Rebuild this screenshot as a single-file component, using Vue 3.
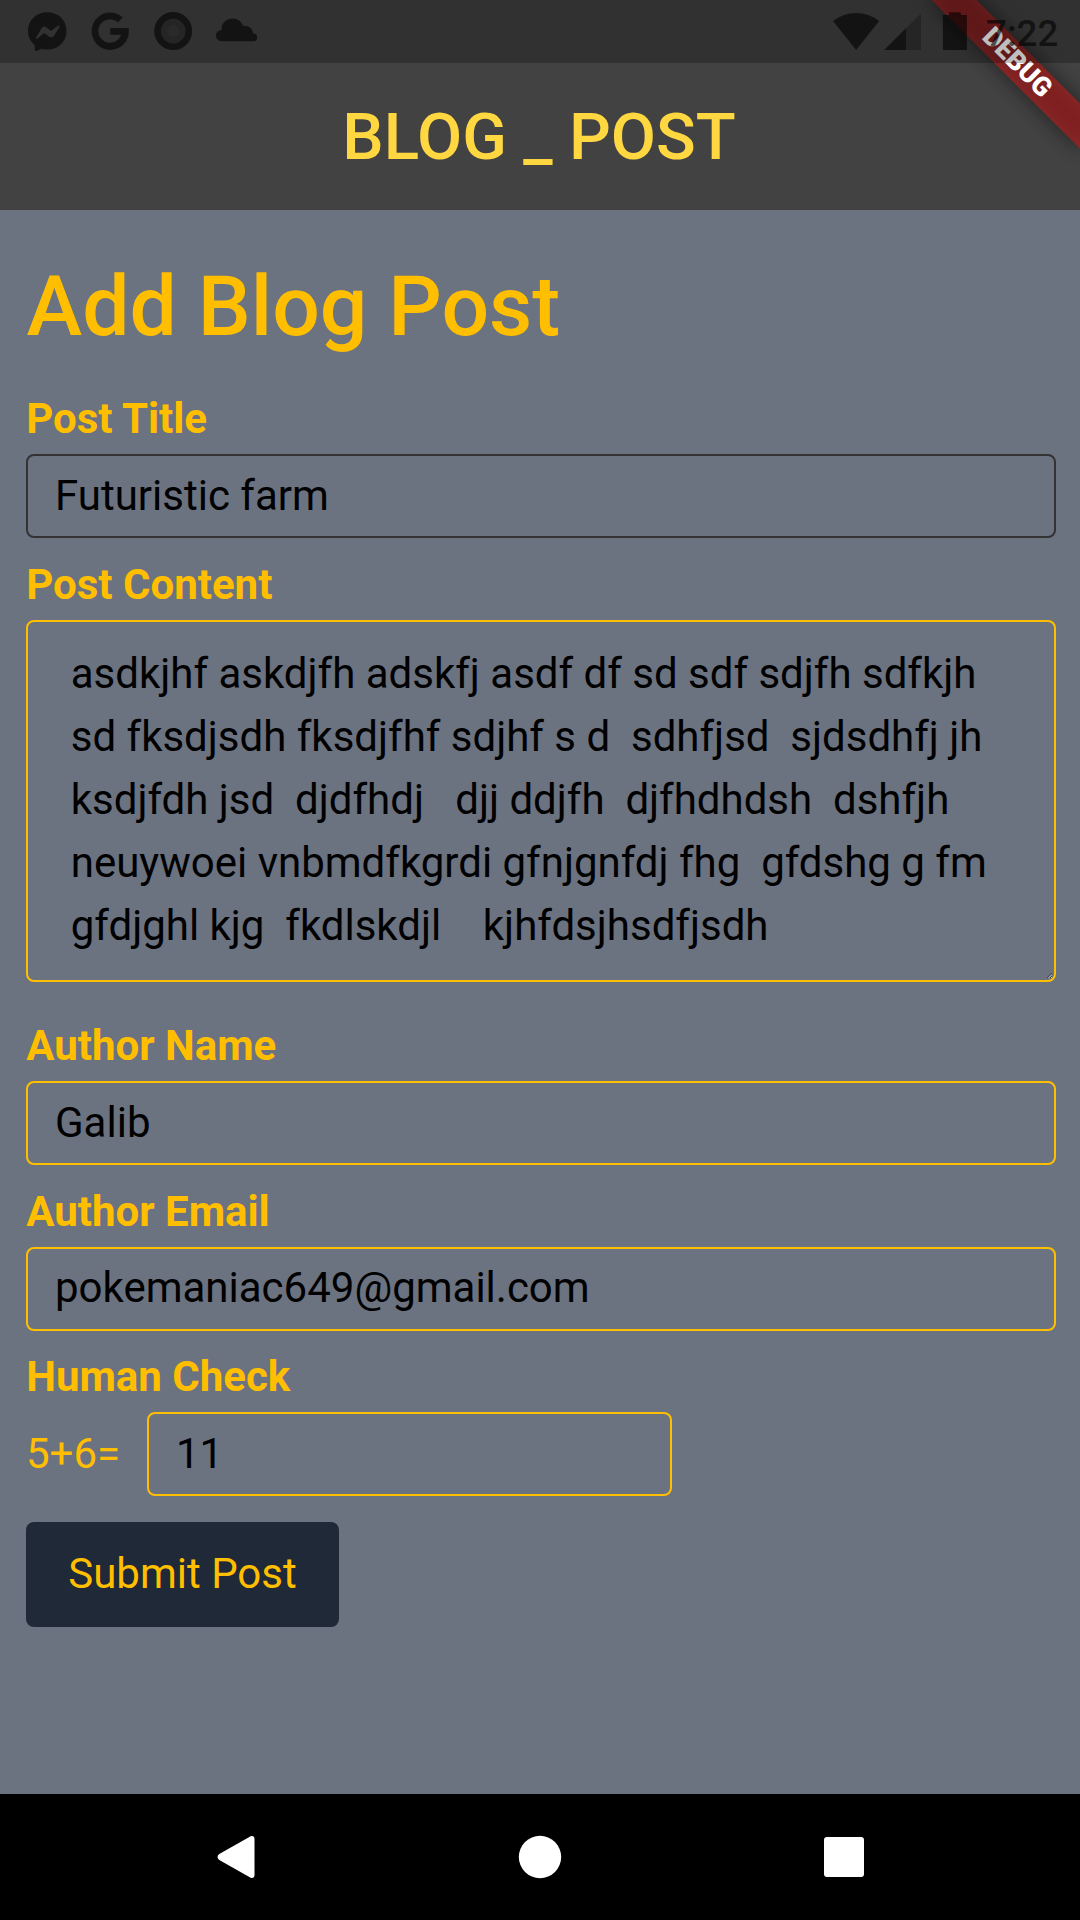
<script setup>
const content = [
  'asdkjhf askdjfh adskfj asdf df sd sdf sdjfh sdfkjh',
  'sd fksdjsdh fksdjfhf sdjhf s d  sdhfjsd  sjdsdhfj jh',
  'ksdjfdh jsd  djdfhdj   djj ddjfh  djfhdhdsh  dshfjh',
  'neuywoei vnbmdfkgrdi gfnjgnfdj fhg  gfdshg g fm',
  'gfdjghl kjg  fkdlskdjl    kjhfdsjhsdfjsdh',
].join('\n')
</script>

<template>
  <div class="screen">
    <header class="top">
      <h1 class="app-title">BLOG _ POST</h1>
      <div class="banner-clip">
        <div class="banner-shadow"></div>
        <div class="banner">DEBUG</div>
      </div>
      <div class="status">
        <svg class="notifications" width="270" height="63" viewBox="0 0 270 63">
          <path fill-rule="evenodd" d="M47.3 12.3c-11 0-19.3 8-19.3 18.6 0 5.6 2.3 10.3 6.2 13.6.4.4.5.8.5 1.3v3.4c0 1.200 1.200 2 2.300 1.500l4-1.700c.4-.2.7-.2 1.100-.1 1.700.5 3.400.7 5.200.7 11 0 19.200-8 19.200-18.700S58.300 12.300 47.300 12.300zM36 37.800l5.600-9.600c1-1.700 3-2.100 4.500-.9l4.300 3.300c.5.3 1 .3 1.400 0l6.300-5c.9-.7 2 .4 1.400 1.300l-5.700 9c-1 1.500-3 1.900-4.500.8l-4.300-3.300c-.4-.3-1-.3-1.400 0l-6.100 5.100c-.9.6-2-.1-1.500-.7z" />
          <path d="M122.800 17.300A18.700 18.700 0 1 0 128.700 28H110.300v6.700h10.800A11.700 11.700 0 1 1 118 22.500z" />
          <path fill-rule="evenodd" d="M173.200 12.100a19 19 0 1 0 0 38 19 19 0 0 0 0-38zm0 6.700a12.300 12.300 0 1 1 0 24.600 12.300 12.300 0 0 1 0-24.600z" />
          <circle cx="173.200" cy="31.100" r="12.300" fill-opacity=".39" />
          <circle cx="173.200" cy="31.100" r="6" fill="#fff" fill-opacity=".025" />
          <path d="M221.500 41.300a5.700 5.700 0 0 1 .2-11.400C221 23.500 226 18.500 232.500 18.500c5 0 8.900 3 10.600 7.400 5.300-.7 9.500 2.500 10.100 7.600a3.900 3.900 0 0 1 .1 7.800z" />
        </svg>
        <svg class="indicators" width="140" height="63" viewBox="0 0 140 63">
          <path d="M3 21C16.500 10.300 35.700 10.300 49.200 21L26.100 50z" />
          <path fill-opacity=".39" d="M54.300 50 91 13.300V50z" />
          <path fill-opacity=".79" d="M54.300 50 76 28.300V50z" />
          <path d="M119 12.300h11.900v2.700h6v35h-24V15h6.100z" />
        </svg>
        <span class="clock">7:22</span>
      </div>
    </header>

    <main class="page">
      <h2 class="heading">Add Blog Post</h2>

      <div class="field">
        <div class="label">Post Title</div>
        <div class="input focused">Futuristic farm</div>
      </div>
      <div class="field">
        <div class="label">Post Content</div>
        <div class="textarea">{{ content }}
          <svg class="grip" width="5" height="5" viewBox="0 0 5 5">
            <path class="grip-light" d="M1.500 5 5 1.500M4 5 5 4" />
            <path d="M0 5 5 0M3 5 5 3" />
          </svg>
        </div>
      </div>
      <div class="field after-area">
        <div class="label">Author Name</div>
        <div class="input">Galib</div>
      </div>
      <div class="field">
        <div class="label">Author Email</div>
        <div class="input raised">pokemaniac649@gmail.com</div>
      </div>
      <div class="field check">
        <div class="label">Human Check</div>
        <div class="row">
          <span class="sum">5+6=</span>
          <div class="input short">11</div>
        </div>
      </div>
      <button class="submit" type="button">Submit Post</button>
    </main>

    <nav class="nav">
      <svg width="1080" height="126" viewBox="0 0 1080 126" fill="#fff">
        <path d="M219.300 60 250.200 42.500C252.500 41.300 254.500 42.300 254.500 45V81C254.500 83.700 252.500 84.700 250.200 83.500L219.300 66C217 64.500 217 61.500 219.300 60z" />
        <circle cx="540" cy="63" r="21.200" />
        <rect x="824" y="43" width="40" height="40" rx="3" />
      </svg>
    </nav>
  </div>
</template>

<style>
body {
  margin: 0;
}
</style>

<style scoped>
.screen {
  width: 1080px;
  height: 1920px;
  display: flex;
  flex-direction: column;
  overflow: hidden;
  background: #6b7280;
  font-family: Roboto, sans-serif;
  font-size: 42px;
  line-height: 63px;
}
.top {
  position: relative;
  flex: none;
  box-sizing: border-box;
  height: 210px;
  padding: 63px 2px 0 0;
  display: flex;
  align-items: center;
  justify-content: center;
  background: #424242;
}
.app-title {
  margin: 0;
  color: #ffd740;
  font-size: 65.625px;
  font-weight: 500;
  line-height: 77px;
}
.status {
  position: absolute;
  inset: 0 0 auto 0;
  height: 63px;
  display: flex;
  background: rgba(0, 0, 0, 0.25);
  fill: rgba(0, 0, 0, 0.6);
}
.indicators {
  margin-left: 560px;
}
.clock {
  margin-left: 16px;
  padding-top: 2px;
  color: rgba(0, 0, 0, 0.6);
  font-size: 36.75px;
  font-weight: 500;
  line-height: 63px;
}
.banner-clip {
  position: absolute;
  top: 0;
  right: 0;
  width: 230px;
  height: 210px;
  overflow: hidden;
}
.banner,
.banner-shadow {
  position: absolute;
  left: 61.900px;
  top: 47.350px;
  width: 210px;
  height: 31.500px;
  transform: rotate(45deg);
}
.banner-shadow {
  background: rgba(0, 0, 0, 0.5);
  filter: blur(10.400px);
}
.banner {
  background: rgba(183, 28, 28, 0.627);
  color: #fff;
  font-size: 26.775px;
  font-weight: 900;
  line-height: 31.500px;
  text-align: center;
}
.page {
  flex: 1;
  padding: 44px 24px 0 26px;
}
.heading {
  margin: 0 0 28px;
  padding-left: 0.500px;
  color: #ffbf00;
  font-size: 84px;
  font-weight: 500;
  line-height: 105px;
}
.field {
  margin-bottom: 15px;
}
.after-area {
  margin-top: 32px;
}
.label {
  margin-bottom: 4px;
  padding-left: 0.250px;
  color: #ffbf00;
  font-weight: 700;
}
.input {
  box-sizing: border-box;
  height: 84px;
  padding: 8px 27px;
  border: 2px solid #ffbf00;
  border-radius: 8px;
  color: #000;
}
.raised {
  padding-top: 7px;
}
.focused {
  border-color: #333;
}
.textarea {
  position: relative;
  box-sizing: border-box;
  height: 362px;
  padding: 20px 42.750px;
  border: 2px solid #ffbf00;
  border-radius: 8px;
  color: #000;
  white-space: pre;
}
.grip {
  position: absolute;
  right: 2px;
  bottom: 2px;
  stroke: #333;
  stroke-width: 0.8;
}
.grip-light {
  stroke: #ddd;
}
.check {
  margin-top: -1px;
  margin-bottom: 26px;
}
.row {
  display: flex;
  align-items: center;
}
.sum {
  width: 121px;
  padding-bottom: 2px;
  color: #ffbf00;
}
.short {
  width: 525px;
}
.submit {
  width: 313px;
  height: 105px;
  padding: 0 0 2px;
  border: 0;
  border-radius: 8px;
  background: #1f2937;
  color: #ffbf00;
  font: inherit;
}
.nav {
  flex: none;
  height: 126px;
  background: #000;
}
.nav svg {
  display: block;
}
</style>
